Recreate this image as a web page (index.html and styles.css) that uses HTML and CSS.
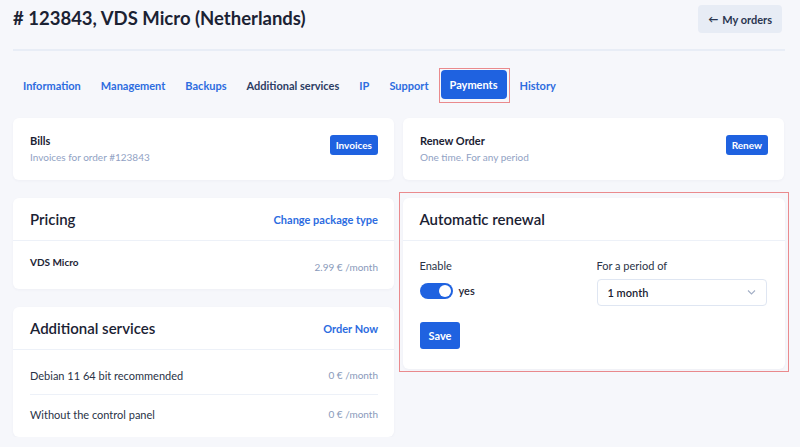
FILE: index.html
```html
<!DOCTYPE html>
<html lang="en">
<head>
    <meta charset="UTF-8">
    <meta name="viewport" content="width=device-width, initial-scale=1.0">
    <title>Order #123843</title>
    <link rel="stylesheet" href="styles.css">
</head>
<body>
    <div class="page">
        <div class="head">
            <h1>#&nbsp;123843, VDS Micro (Netherlands)</h1>
            <a class="back" href="#"><span class="arrow">&larr;</span> My orders</a>
        </div>

        <nav class="tabs">
            <a href="#">Information</a>
            <a href="#">Management</a>
            <a href="#">Backups</a>
            <a href="#" class="dark">Additional services</a>
            <a href="#">IP</a>
            <a href="#">Support</a>
            <span class="mark"><a href="#" class="active">Payments</a></span>
            <a href="#">History</a>
        </nav>

        <div class="grid">
            <div class="col">
                <div class="card small">
                    <div>
                        <div class="name">Bills</div>
                        <div class="sub">Invoices for order #123843</div>
                    </div>
                    <button class="btn">Invoices</button>
                </div>

                <div class="card">
                    <div class="card-head">
                        <h2>Pricing</h2>
                        <a href="#">Change package type</a>
                    </div>
                    <div class="card-body">
                        <div class="price-row">
                            <span class="pkg">VDS Micro</span>
                            <span class="cost">2.99 € /month</span>
                        </div>
                    </div>
                </div>

                <div class="card">
                    <div class="card-head">
                        <h2>Additional services</h2>
                        <a href="#">Order Now</a>
                    </div>
                    <div class="card-body list">
                        <div class="svc">
                            <span>Debian 11 64 bit recommended</span>
                            <span class="cost">0 € /month</span>
                        </div>
                        <div class="svc">
                            <span>Without the control panel</span>
                            <span class="cost">0 € /month</span>
                        </div>
                    </div>
                </div>
            </div>

            <div class="col">
                <div class="card small">
                    <div>
                        <div class="name">Renew Order</div>
                        <div class="sub">One time. For any period</div>
                    </div>
                    <button class="btn">Renew</button>
                </div>

                <div class="mark-box">
                    <div class="card">
                        <div class="card-head">
                            <h2>Automatic renewal</h2>
                        </div>
                        <div class="card-body form">
                            <div class="fields">
                                <div class="field">
                                    <label>Enable</label>
                                    <div class="switch-row">
                                        <span class="switch"><span class="knob"></span></span>
                                        yes
                                    </div>
                                </div>
                                <div class="field">
                                    <label>For a period of</label>
                                    <div class="select">
                                        1 month
                                        <svg width="9" height="5" viewBox="0 0 9 5"><path d="M1 0.5l3.5 3.5 3.5-3.5" fill="none" stroke="#a3afc6" stroke-width="1.1"/></svg>
                                    </div>
                                </div>
                            </div>
                            <button class="btn save">Save</button>
                        </div>
                    </div>
                </div>
            </div>
        </div>
    </div>
</body>
</html>
```

FILE: styles.css
```css
body {
    margin: 0;
    background: #f6f7fb;
    font-family: Lato, "Open Sans", sans-serif;
    color: #1d2435;
}
.page {
    width: 772px;
    padding: 0 0 0 13px;
}
.head {
    display: flex;
    justify-content: space-between;
    align-items: center;
    height: 44px;
    padding: 5px 3px 0 0;
    border-bottom: 2px solid #e8edf6;
    margin-bottom: 19px;
    box-sizing: content-box;
}
.head h1 {
    align-self: flex-start;
    margin: 2px 0 0;
    font-size: 18.5px;
    font-weight: 700;
    color: #1b2233;
}
.back {
    display: flex;
    align-items: center;
    align-self: flex-start;
    gap: 4px;
    height: 28px;
    padding: 0 10px;
    background: #e7ecf5;
    border-radius: 4px;
    color: #2a3550;
    font-size: 11px;
    font-weight: 700;
    text-decoration: none;
}
.arrow {
    font-size: 10px;
}
.tabs {
    display: flex;
    align-items: center;
    gap: 20px;
    padding-left: 10px;
    height: 30px;
    margin-bottom: 18px;
}
.tabs a {
    color: #2d6cdf;
    font-size: 11px;
    font-weight: 700;
    text-decoration: none;
}
.tabs a.dark {
    color: #2c3c63;
}
.mark {
    display: flex;
    padding: 1px 2px 3px 1px;
    margin: 0 -10px 0 -10px;
    border: 1.5px solid #ea8a8d;
}
.tabs a.active {
    display: block;
    background: #1f62e0;
    color: #fff;
    padding: 8px 9px;
    border-radius: 4px;
}
.grid {
    display: grid;
    grid-template-columns: 381px 381px;
    gap: 9px;
}
.col {
    display: flex;
    flex-direction: column;
    gap: 18px;
}
.card {
    background: #fff;
    border-radius: 6px;
    box-shadow: 0 1px 3px rgba(40, 60, 100, 0.04);
}
.card.small {
    display: flex;
    justify-content: space-between;
    align-items: flex-start;
    height: 62px;
    box-sizing: border-box;
    padding: 16px 16px 0 17px;
}
.name {
    font-size: 11px;
    font-weight: 700;
    color: #1b2233;
}
.sub {
    margin-top: 4px;
    font-size: 10px;
    color: #91a2c4;
}
.btn {
    background: #1f62e0;
    color: #fff;
    border: none;
    border-radius: 3px;
    font-family: inherit;
    font-size: 10px;
    font-weight: 700;
    height: 20px;
    padding: 0 6px;
    margin-top: 1px;
}
.card-head {
    display: flex;
    justify-content: space-between;
    align-items: center;
    height: 42px;
    padding: 0 16px 0 17px;
    border-bottom: 1px solid #edf1f8;
}
.card-head h2 {
    margin: 0;
    font-size: 15px;
    font-weight: 600;
    color: #1b2233;
}
.card-head a {
    color: #2d6cdf;
    font-size: 11px;
    font-weight: 700;
    text-decoration: none;
}
.card-body {
    padding: 0 16px 0 17px;
}
.price-row {
    display: flex;
    justify-content: space-between;
    align-items: flex-start;
    height: 48px;
    padding-top: 15px;
    box-sizing: border-box;
}
.pkg {
    font-size: 10px;
    font-weight: 700;
}
.cost {
    font-size: 10px;
    color: #8a9abb;
}
.price-row .cost {
    margin-top: 5px;
}
.list {
    padding-top: 6px;
    padding-bottom: 4px;
}
.svc {
    display: flex;
    justify-content: space-between;
    align-items: center;
    height: 38px;
    font-size: 11px;
    color: #2a3347;
}
.svc + .svc {
    border-top: 1px solid #edf1f8;
}
.mark-box {
    margin: -6px -5px -4px -4px;
    padding: 4.5px 3.5px 2.5px 2.5px;
    border: 1.5px solid #ea8a8d;
}
.form {
    padding-top: 18px;
    padding-bottom: 20px;
}
.fields {
    display: grid;
    grid-template-columns: 177px 170px;
    margin-bottom: 16px;
}
.field label {
    display: block;
    font-size: 11px;
    color: #2a3347;
    margin-bottom: 7px;
}
.switch-row {
    display: flex;
    align-items: center;
    gap: 6px;
    font-size: 11px;
    font-weight: 600;
    margin-top: 11px;
}
.switch {
    display: flex;
    justify-content: flex-end;
    align-items: center;
    width: 33px;
    height: 16px;
    padding: 0 2px;
    box-sizing: border-box;
    background: #1f62e0;
    border-radius: 8px;
}
.knob {
    width: 12px;
    height: 12px;
    border-radius: 50%;
    background: #fff;
}
.select {
    display: flex;
    justify-content: space-between;
    align-items: center;
    height: 27px;
    padding: 0 10px;
    border: 1px solid #dfe6f2;
    border-radius: 4px;
    box-sizing: border-box;
    font-size: 11px;
    font-weight: 600;
    color: #1b2233;
}
.btn.save {
    height: 27px;
    padding: 0 9px;
    font-size: 11px;
    margin: 0;
}
```
